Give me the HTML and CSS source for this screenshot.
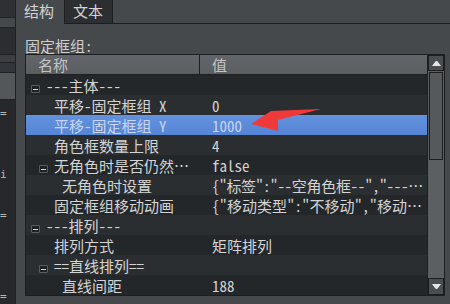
FILE: index.html
```html
<!DOCTYPE html>
<html lang="zh">
<head>
<meta charset="UTF-8" />
  <title>属性编辑器</title>
  <link rel="stylesheet" href="styles.css">
</head>
<body>
<div class="window">
  <div class="side">
    <div class="band b1"></div>
    <div class="band b2"></div>
    <div class="band b3"></div>
    <div class="band b4"></div>
    <div class="band b5"></div>
    <div class="band b6"></div>
    <div class="side-rest">
      <span class="frag f1">=</span>
      <span class="frag f2">i</span>
      <span class="frag f3">=</span>
      <span class="frag f4">=</span>
    </div>
  </div>

  <div class="main">
    <div class="tabs">
      <div class="tab active">结构</div>
      <div class="tab">文本</div>
      <div class="tab-fill"></div>
    </div>

    <div class="panel">
      <div class="caption">固定框组:</div>
      <div class="tree">
        <div class="tree-body">
          <div class="head">
            <div class="h-name">名称</div>
            <div class="h-val">值</div>
          </div>
          <!-- rows: odd rows dark, even rows light -->
          <div class="row">
            <div class="name lv0"><span class="fold"></span>---主体---</div>
            <div class="val"></div>
          </div>
          <div class="row alt">
            <div class="name lv1">平移-固定框组 X</div>
            <div class="val">0</div>
          </div>
          <div class="row selected">
            <div class="name lv1">平移-固定框组 Y</div>
            <div class="val">1000</div>
          </div>
          <div class="row alt">
            <div class="name lv1">角色框数量上限</div>
            <div class="val">4</div>
          </div>
          <div class="row">
            <div class="name lv1"><span class="fold"></span>无角色时是否仍然…</div>
            <div class="val">false</div>
          </div>
          <div class="row alt">
            <div class="name lv2">无角色时设置</div>
            <div class="val long">{"标签":"--空角色框--","---…</div>
          </div>
          <div class="row">
            <div class="name lv1">固定框组移动动画</div>
            <div class="val">{"移动类型":"不移动","移动…</div>
          </div>
          <div class="row alt">
            <div class="name lv0"><span class="fold"></span>---排列---</div>
            <div class="val"></div>
          </div>
          <div class="row">
            <div class="name lv1">排列方式</div>
            <div class="val">矩阵排列</div>
          </div>
          <div class="row alt">
            <div class="name lv1"><span class="fold"></span>==直线排列==</div>
            <div class="val"></div>
          </div>
          <div class="row">
            <div class="name lv2">直线间距</div>
            <div class="val">188</div>
          </div>
        </div>

        <div class="scroll">
          <div class="sbtn up">
            <svg width="9" height="5" viewBox="0 0 9 5"><path d="M0 5 L3 1 L4 0 L5 0 L6 1 L9 5 Z" fill="#e6e6e6"/></svg>
          </div>
          <div class="thumb"></div>
          <div class="track"></div>
          <div class="sbtn down">
            <svg width="9" height="5" viewBox="0 0 9 5"><path d="M0 0 L9 0 L6 4 L5 5 L4 5 L3 4 Z" fill="#e6e6e6"/></svg>
          </div>
        </div>
      </div>
    </div>
  </div>

  <!-- annotation arrow drawn on top of the screenshot -->
  <svg class="arrow" width="450" height="304" viewBox="0 0 450 304">
    <polygon points="251,124 271,111 321,109 278,120 278,131" fill="#f03a3a"/>
  </svg>
</div>
</body>
</html>
```

FILE: styles.css
```css
* {
  box-sizing: border-box;
}
body {
  margin: 0;
  background: #46494c;
  font-family: "Noto Sans Mono CJK SC", "Noto Sans CJK SC", monospace;
  font-size: 15px;
  color: #d4d4d4;
}
.window {
  position: relative;
  display: flex;
  width: 450px;
  height: 304px;
  overflow: hidden;
}

/* left neighbour window */
.side {
  width: 16px;
  height: 304px;
  border-right: 1px solid #1f2123;
  display: flex;
  flex-direction: column;
  background: #26282b;
}
.band {
  border-bottom: 1px solid #1f2123;
}
.b1 { height: 18px; background: #2e3033; }
.b2 { height: 10px; background: #46494c; }
.b3 { height: 27px; background: #2b2d30; }
.b4 { height: 8px; background: #3c3f42; }
.b5 { height: 10px; background: #33363a; }
.b6 { height: 27px; background: #54575a; }
.side-rest {
  flex: 1;
  position: relative;
  font-family: "DejaVu Sans Mono", monospace;
  font-size: 11px;
  color: #b8b8b8;
}
.frag {
  position: absolute;
  left: 0;
  line-height: 12px;
}
.f1 { top: 8px; }
.f2 { top: 69px; }
.f3 { top: 110px; }
.f4 { top: 191px; }

.main {
  flex: 1;
  display: flex;
  flex-direction: column;
}
.tabs {
  display: flex;
  height: 24px;
}
.tab {
  height: 24px;
  line-height: 22px;
  padding-left: 8px;
  color: #d4d4d4;
}
.tab.active {
  width: 48px;
  background: #46494c;
}
.tab:not(.active) {
  width: 49px;
  background: #2c2f32;
  border-left: 1px solid #1c1e20;
  border-right: 1px solid #1c1e20;
  border-bottom: 1px solid #1c1e20;
}
.tab-fill {
  flex: 1;
  border-bottom: 1px solid #1c1e20;
}

.panel {
  padding: 13px 0 0 9px;
}
.caption {
  height: 17px;
  line-height: 17px;
  color: #cfcfcf;
}

.tree {
  display: flex;
  width: 420px;
  height: 242px;
  border: 1px solid #1c1e20;
}
.tree-body {
  width: 401px;
  background: #24272a;
}
.head {
  display: flex;
  height: 20px;
  background: linear-gradient(#62666a, #5a5e61);
  border-bottom: 1px solid #1c1e20;
  line-height: 19px;
  color: #c4c4c4;
}
.h-name {
  width: 174px;
  padding-left: 12px;
  border-right: 1px solid #1c1e20;
}
.h-val {
  padding-left: 12px;
}
.row {
  display: flex;
  height: 20px;
  line-height: 20px;
  padding-top: 1px;
  white-space: nowrap;
}
.row.alt {
  background: #2b2e31;
}
.row.selected {
  background: linear-gradient(#6291de, #5685d5);
  color: #c9d6ee;
}
.name {
  width: 174px;
  overflow: hidden;
}
.lv0 { padding-left: 20px; }
.lv1 { padding-left: 28px; }
.lv2 { padding-left: 36px; }
.val {
  flex: 1;
  padding-left: 12px;
  overflow: hidden;
}
.val.long {
  letter-spacing: -0.3px;
}
.fold {
  display: inline-block;
  width: 9px;
  height: 8px;
  margin-left: -15px;
  margin-right: 6px;
  vertical-align: -1px;
  border: 1px solid #5a5d60;
  border-radius: 1px;
  background: #1f2123 linear-gradient(#d8d8d8, #d8d8d8) no-repeat center / 5px 1px;
}

.scroll {
  width: 17px;
  border-left: 1px solid #1c1e20;
  display: flex;
  flex-direction: column;
  background: #5b5f62;
}
.sbtn {
  height: 17px;
  border: 1px solid #1c1e20;
  background: #4b4e51;
  display: flex;
  align-items: center;
  justify-content: center;
}
.sbtn.up {
  height: 16px;
}
.thumb {
  height: 88px;
  margin: 1px 1px 0;
  border: 1px solid #1c1e20;
  background: #56595c;
}
.track {
  flex: 1;
}

.arrow {
  position: absolute;
  left: 0;
  top: 0;
  pointer-events: none;
}
```
